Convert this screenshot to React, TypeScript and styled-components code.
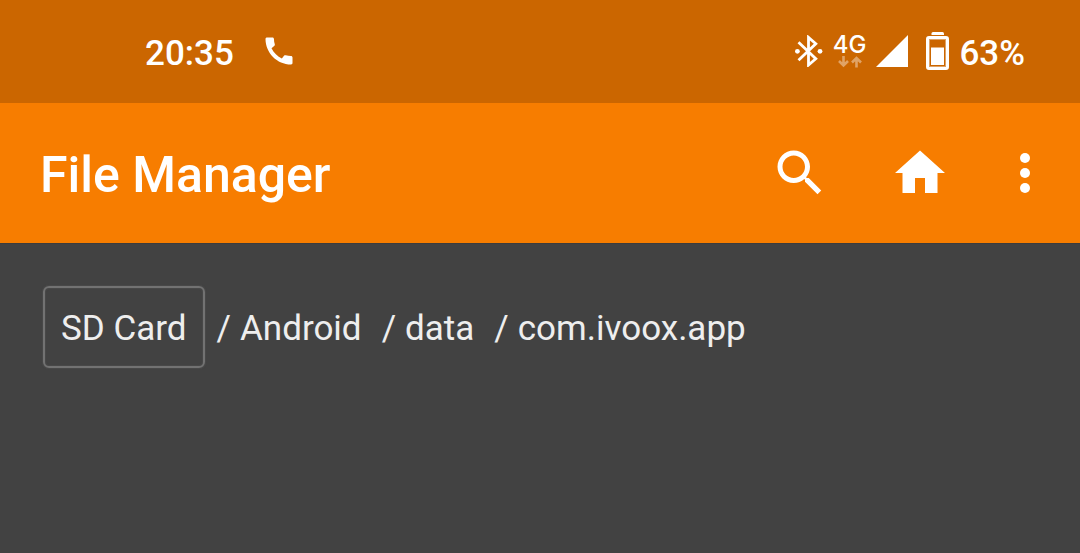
import React from "react";
import styled, { createGlobalStyle } from "styled-components";

const GlobalStyle = createGlobalStyle`
  *, *::before, *::after { box-sizing: border-box; }
  body {
    margin: 0;
    background: #424242;
    color: #ffffff;
    font-family: Roboto, "Liberation Sans", sans-serif;
  }
`;

const StatusBar = styled.div`
  display: flex;
  align-items: center;
  justify-content: space-between;
  padding: 27px 55px 28px 145px;
  background: #cb6600;
`;

const StatusGroup = styled.div<{ $gap: number }>`
  display: flex;
  align-items: center;
  gap: ${({ $gap }) => $gap}px;
`;

const StatusText = styled.span`
  padding-top: 6px;
  font-size: 35px;
  line-height: 42px;
  font-weight: 500;
`;

const Glyph = styled.svg`
  display: block;
  flex: none;
  fill: currentColor;
`;

const Network = styled.div`
  display: flex;
  flex-direction: column;
  align-items: center;
`;

const NetworkLabel = styled.span`
  font-family: Inter, sans-serif;
  font-size: 24px;
  line-height: 22px;
  font-weight: 500;
`;

const AppBar = styled.header`
  display: flex;
  align-items: center;
  justify-content: space-between;
  padding: 38px 25px 38px 40px;
  background: #f77d00;
`;

const Title = styled.h1`
  margin: 0;
  padding-top: 4px;
  font-size: 50px;
  line-height: 60px;
  font-weight: 500;
`;

const Actions = styled.div`
  display: flex;
  align-items: center;
`;

const IconButton = styled.button<{ $after?: number }>`
  display: block;
  margin: 0 ${({ $after = 0 }) => $after}px 0 0;
  padding: 0;
  border: 0;
  background: none;
  color: inherit;
  cursor: pointer;
`;

const Content = styled.main`
  padding: 42px 43px;
  border-top: 1px solid #3c3c3c;
`;

const Crumbs = styled.ol`
  display: flex;
  flex-wrap: wrap;
  align-items: baseline;
  gap: 20px;
  margin: 0;
  padding: 0;
  list-style: none;
  color: #eeeeee;
  font-size: 35px;
  line-height: 42px;
`;

const Crumb = styled.li`
  display: flex;
  align-items: baseline;
  gap: 9px;

  &:first-child {
    margin-right: -8px;
  }
`;

const CrumbLink = styled.a<{ $boxed?: boolean }>`
  padding: ${({ $boxed }) => ($boxed ? "20px 16px 16px" : "0")};
  border: ${({ $boxed }) => ($boxed ? "2px solid #727272" : "0")};
  border-radius: 6px;
  box-shadow: ${({ $boxed }) =>
    $boxed ? "0 0 1px 1px #52525280, inset 0 0 1px 1px #52525280" : "none"};
  color: inherit;
  text-decoration: none;
`;

const path = ["Android", "data", "com.ivoox.app"];

export default function App() {
  return (
    <>
      <GlobalStyle />
      <StatusBar>
        <StatusGroup $gap={27}>
          <StatusText>20:35</StatusText>
          <Glyph width="36" height="36" viewBox="0 0 24 24" aria-hidden="true">
            <path d="M20.01 15.38c-1.23 0-2.42-.2-3.53-.56-.35-.12-.74-.03-1.01.24l-1.57 1.97c-2.83-1.35-5.48-3.9-6.89-6.83l1.95-1.66c.27-.28.35-.67.24-1.02-.37-1.11-.56-2.3-.56-3.53 0-.54-.45-.99-.99-.99H4.19C3.65 3 3 3.24 3 3.99 3 13.28 10.73 21 20.01 21c.71 0 .99-.63.99-1.18v-3.45c0-.54-.45-.99-.99-.99z" />
          </Glyph>
        </StatusGroup>
        <StatusGroup $gap={10}>
          <StatusGroup $gap={18}>
            <StatusGroup $gap={10}>
              <Glyph width="28" height="32" viewBox="0 0 28 32" aria-hidden="true">
                <path
                  d="M3.5 7.2 20.8 23.7 13.5 30V2.4L20.8 8.7 3.5 25.2"
                  fill="none"
                  stroke="currentColor"
                  strokeWidth="2.8"
                />
                <circle cx="2.4" cy="16.3" r="2.4" />
                <circle cx="25" cy="16.3" r="2.4" />
              </Glyph>
              <Network>
                <NetworkLabel>4G</NetworkLabel>
                <Glyph width="26" height="12" viewBox="0 0 26 12" aria-hidden="true">
                  <path
                    d="M6.500 0v9M2 5l4.500 4.500L11 5M19.500 11.500V2.500M15 6.500 19.500 2 24 6.500"
                    fill="none"
                    stroke="#e0a366"
                    strokeWidth="2.6"
                  />
                </Glyph>
              </Network>
              <Glyph width="32" height="32" viewBox="0 0 32 32" aria-hidden="true">
                <path d="M0 32 32 0V32z" />
              </Glyph>
            </StatusGroup>
            <Glyph width="23" height="38" viewBox="0 0 23 38" aria-hidden="true">
              <path d="M5.500 3V1.500Q5.500 0 7 0h9.500Q18 0 18 1.500V3z" />
              <rect x="1.5" y="5.500" width="20" height="31" rx="1.500" fill="none" stroke="currentColor" strokeWidth="3" />
              <rect x="3.500" y="7.500" width="16" height="27" fill="none" stroke="#e0a366" strokeWidth="1" />
              <path d="M5 15.500h13V33H5z" />
            </Glyph>
          </StatusGroup>
          <StatusText>63%</StatusText>
        </StatusGroup>
      </StatusBar>
      <AppBar>
        <Title>File Manager</Title>
        <Actions>
          <IconButton $after={60} aria-label="Search">
            <Glyph width="60" height="60" viewBox="0 0 24 24">
              <path d="M15.500 14h-.79l-.28-.27C15.410 12.590 16 11.110 16 9.500 16 5.910 13.090 3 9.500 3S3 5.910 3 9.500 5.910 16 9.500 16c1.610 0 3.090-.59 4.230-1.570l.27.28v.79l5 4.990L20.490 19l-4.990-5zm-6 0C7.010 14 5 11.990 5 9.500S7.010 5 9.500 5 14 7.010 14 9.500 11.990 14 9.500 14z" />
            </Glyph>
          </IconButton>
          <IconButton $after={45} aria-label="Home">
            <Glyph width="60" height="60" viewBox="0 0 24 24">
              <path d="M10 20v-6h4v6h5v-8h3L12 3 2 12h3v8z" />
            </Glyph>
          </IconButton>
          <IconButton aria-label="More options">
            <Glyph width="60" height="60" viewBox="0 0 24 24">
              <circle cx="12" cy="6" r="2" />
              <circle cx="12" cy="12" r="2" />
              <circle cx="12" cy="18" r="2" />
            </Glyph>
          </IconButton>
        </Actions>
      </AppBar>
      <Content>
        <nav aria-label="Folder path">
          <Crumbs>
            <Crumb>
              <CrumbLink $boxed href="#sd-card">
                SD Card
              </CrumbLink>
            </Crumb>
            {path.map((name) => (
              <Crumb key={name}>
                <span>/</span>
                <CrumbLink href={`#${name}`}>{name}</CrumbLink>
              </Crumb>
            ))}
          </Crumbs>
        </nav>
      </Content>
    </>
  );
}
